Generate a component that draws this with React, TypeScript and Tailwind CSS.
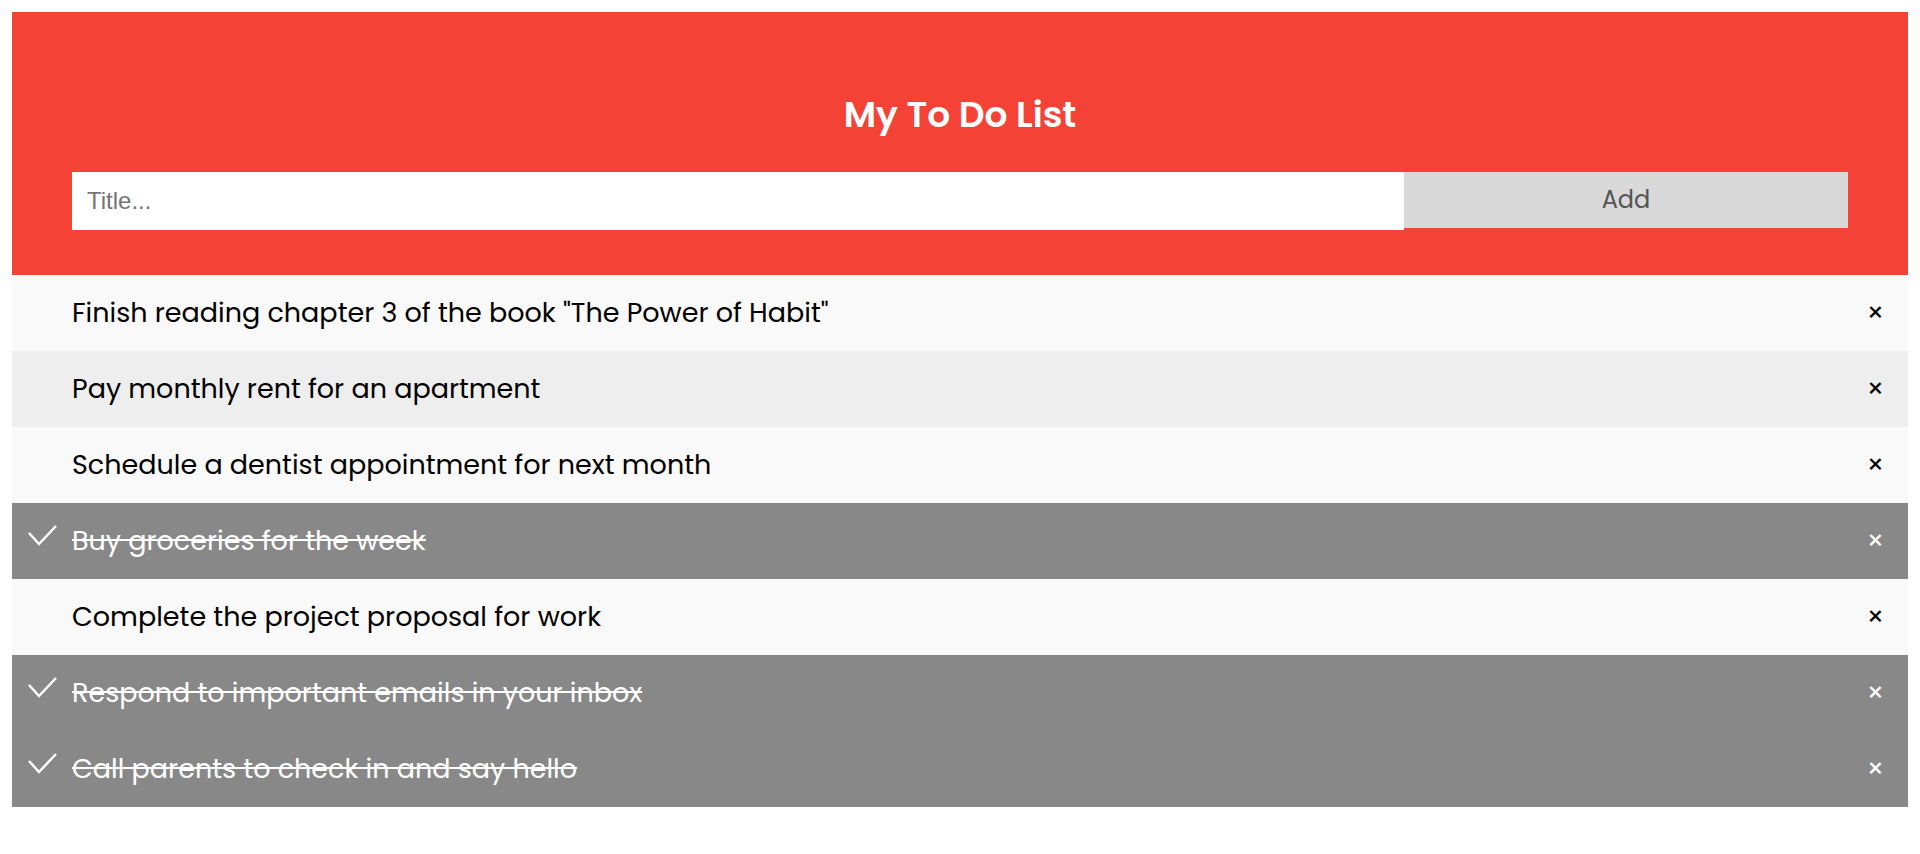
import React from "react";

type Todo = { title: string; done: boolean };

const todos: Todo[] = [
  { title: 'Finish reading chapter 3 of the book "The Power of Habit"', done: false },
  { title: "Pay monthly rent for an apartment", done: false },
  { title: "Schedule a dentist appointment for next month", done: false },
  { title: "Buy groceries for the week", done: true },
  { title: "Complete the project proposal for work", done: false },
  { title: "Respond to important emails in your inbox", done: true },
  { title: "Call parents to check in and say hello", done: true },
];

const CheckMark = () => (
  <svg width="30" height="21" viewBox="0 0 30 21" fill="none">
    <polyline points="1,8 11,19 28,1" stroke="#fff" strokeWidth="2.5" />
  </svg>
);

const TodoRow = ({ todo, index }: { todo: Todo; index: number }) => {
  const bg = todo.done ? "bg-[#888888] text-white" : index % 2 === 0 ? "bg-[#f9f9f9] text-black" : "bg-[#eeeeee] text-black";
  return (
    <li className={`flex h-[76px] items-center ${bg}`}>
      <div className="flex h-full w-[60px] shrink-0 items-start pl-[16px] pt-[22px]">
        {todo.done && <CheckMark />}
      </div>
      <span className={`flex-1 text-[27px] ${todo.done ? "line-through" : ""}`}>{todo.title}</span>
      <span className="px-[24px] text-[27px]">×</span>
    </li>
  );
};

const App = () => {
  return (
    <div className="min-h-screen bg-white p-[12px] font-['Poppins','Inter',sans-serif]">
      <div className="bg-[#f44336] px-[60px] pt-[45px] pb-[45px]">
        <h2 className="my-[30px] text-center text-[36px] font-semibold leading-[55px] text-white">
          My To Do List
        </h2>
        <div className="flex items-start">
          <input
            type="text"
            placeholder="Title..."
            className="h-[58px] w-3/4 bg-white px-[15px] font-['Liberation_Sans',Arial,sans-serif] text-[24px] text-black outline-none placeholder:text-[#757575]"
          />
          <span className="flex h-[56px] w-1/4 items-center justify-center bg-[#d9d9d9] text-[24px] text-[#555555]">
            Add
          </span>
        </div>
      </div>
      <ul>
        {todos.map((t, i) => (
          <TodoRow key={i} todo={t} index={i} />
        ))}
      </ul>
    </div>
  );
};

export default App;
